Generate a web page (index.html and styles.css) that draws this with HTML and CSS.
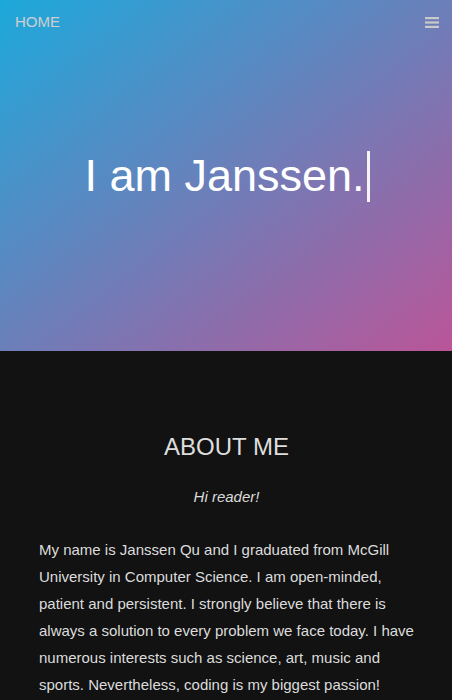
FILE: index.html
```html
<!DOCTYPE html>
<html lang="en">
<head>
<meta charset="utf-8">
<title>Janssen Qu</title>
<link rel="stylesheet" href="styles.css">
</head>
<body>
<header class="hero">
  <nav class="nav">
    <a class="nav-home" href="#">HOME</a>
    <button class="nav-toggle" aria-label="Menu">
      <svg width="14" height="11" viewBox="0 0 14 11"><rect x="0" y="0" width="14" height="2.2" fill="#c9c9c9"/><rect x="0" y="4.4" width="14" height="2.2" fill="#c9c9c9"/><rect x="0" y="8.8" width="14" height="2.2" fill="#c9c9c9"/></svg>
    </button>
  </nav>
  <div class="hero-body">
    <h1 class="hero-title">I am Janssen.<span class="cursor"></span></h1>
  </div>
</header>
<section class="about">
  <h2 class="about-title">ABOUT ME</h2>
  <p class="about-greet">Hi reader!</p>
  <p class="about-text">My name is Janssen Qu and I graduated from McGill University in Computer Science. I am open-minded, patient and persistent. I strongly believe that there is always a solution to every problem we face today. I have numerous interests such as science, art, music and sports. Nevertheless, coding is my biggest passion!</p>
</section>
</body>
</html>
```
FILE: styles.css
```css
* { box-sizing: border-box; }
html, body { margin: 0; padding: 0; }
body {
  background: #121212;
  font-family: "Liberation Sans", Arial, sans-serif;
  color: #dcdcdc;
}
.hero {
  height: 351px;
  background: linear-gradient(to bottom right, #1da9db, #ba5598);
  display: flex;
  flex-direction: column;
}
.nav {
  display: flex;
  justify-content: space-between;
  align-items: center;
  padding: 12px 13px 0 15px;
  height: 32px;
}
.nav-home {
  color: #cfcfcf;
  text-decoration: none;
  font-size: 15px;
  line-height: 20px;
}
.nav-toggle {
  background: none;
  border: 0;
  padding: 0;
  display: flex;
}
.hero-body {
  display: flex;
  justify-content: center;
  align-items: flex-start;
  padding-top: 118px;
}
.hero-title {
  margin: 0;
  font-weight: normal;
  font-size: 45px;
  line-height: 52px;
  color: #fff;
  display: flex;
  align-items: center;
  padding-left: 2px;
}
.cursor {
  display: inline-block;
  width: 3px;
  height: 51px;
  background: #f4f4f4;
  margin-left: 2px;
}
.about {
  padding: 82px 38px 0 39px;
}
.about-title {
  margin: 0;
  text-align: center;
  font-weight: normal;
  font-size: 24px;
  line-height: 28px;
  color: #dedede;
}
.about-greet {
  margin: 26px 0 0;
  text-align: center;
  font-style: italic;
  font-size: 15px;
  line-height: 20px;
}
.about-text {
  margin: 29px 0 0;
  font-size: 15px;
  line-height: 27px;
}
```
